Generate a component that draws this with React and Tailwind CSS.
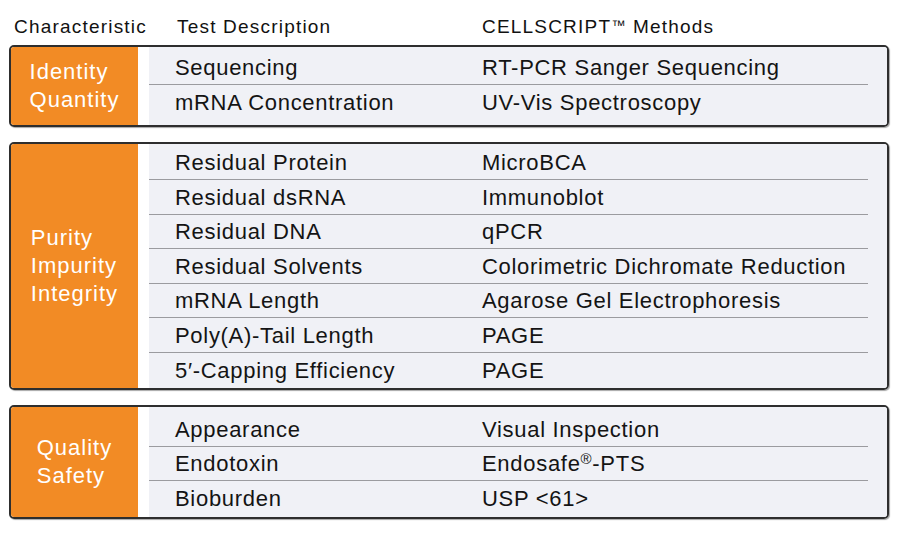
const sections = [
  {
    label: ['Identity', 'Quantity'],
    height: 'h-[82px]',
    shift: 'pb-[2px]',
    rows: [
      ['Sequencing', 'RT-PCR Sanger Sequencing'],
      ['mRNA Concentration', 'UV-Vis Spectroscopy'],
    ],
  },
  {
    label: ['Purity', 'Impurity', 'Integrity'],
    height: 'h-[248px]',
    shift: 'pt-[1px]',
    rows: [
      ['Residual Protein', 'MicroBCA'],
      ['Residual dsRNA', 'Immunoblot'],
      ['Residual DNA', 'qPCR'],
      ['Residual Solvents', 'Colorimetric Dichromate Reduction'],
      ['mRNA Length', 'Agarose Gel Electrophoresis'],
      ['Poly(A)-Tail Length', 'PAGE'],
      ['5\u2032-Capping Efficiency', 'PAGE'],
    ],
  },
  {
    label: ['Quality', 'Safety'],
    height: 'h-[114px]',
    shift: 'pt-[4px]',
    rows: [
      ['Appearance', 'Visual Inspection'],
      ['Endotoxin', <>Endosafe<sup className="text-[15px] -top-[7px]">®</sup>-PTS</>],
      ['Bioburden', 'USP <61>'],
    ],
  },
];

function Section({ section }) {
  return (
    <div
      className={`${section.height} flex overflow-hidden rounded-[5px] border-2 border-[#2e2e2e] shadow-[1px_1px_1px_rgba(0,0,0,0.35)]`}
    >
      {/* orange label */}
      <div className="w-[127px] bg-[#f28b25] flex items-center justify-center">
        <div className="text-white text-[22px] leading-[28px] tracking-[1px]">
          {section.label.map((l) => (
            <div key={l}>{l}</div>
          ))}
        </div>
      </div>
      <div className="w-[11px] bg-white" />
      {/* rows */}
      <div className={`flex-1 bg-[#f0f1f6] pr-[19px] flex flex-col justify-center ${section.shift}`}>
        {section.rows.map((row, i) => (
          <div
            key={i}
            className={`h-[34.5px] flex items-center text-[22px] tracking-[0.7px] text-[#141414] ${
              i < section.rows.length - 1 ? 'border-b border-[#9b9b9f]' : ''
            }`}
          >
            <div className="w-[333px] pl-[26px]">{row[0]}</div>
            <div>{row[1]}</div>
          </div>
        ))}
      </div>
    </div>
  );
}

export default function App() {
  return (
    <div className="w-[900px] h-[534px] bg-white font-['Liberation_Sans',Arial,sans-serif]">
      {/* Header */}
      <div className="h-[45px] pt-[16px] flex text-[19px] leading-[22px] tracking-[1.2px] text-[#111]">
        <div className="w-[177px] pl-[14px]">Characteristic</div>
        <div className="w-[305px]">Test Description</div>
        <div>
          CELLSCRIPT<span className="text-[14px] relative -top-[3px]">™</span> Methods
        </div>
      </div>

      <div className="ml-[9px] w-[880px] flex flex-col gap-[15px]">
        {sections.map((s, i) => (
          <Section key={i} section={s} />
        ))}
      </div>
    </div>
  );
}
